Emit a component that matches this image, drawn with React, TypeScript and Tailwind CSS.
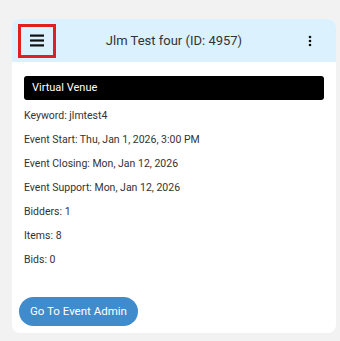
import { ReactNode } from 'react';

const Line = ({ children }: { children: ReactNode }) => (
  <p className="h-6 leading-6 text-[10.5px] text-[#333]">{children}</p>
);

export default function App() {
  return (
    <div className="w-[340px] h-[341px] bg-[#f2f2f2] pt-[19px] pl-3 pr-1 font-['Roboto',sans-serif]">
      <div className="w-[324px] h-[314px] bg-white rounded-lg overflow-hidden flex flex-col">
        <div className="h-[43px] bg-[#dbf1fd] flex items-center pl-[6px] pr-6">
          <button className="w-[38px] h-[34px] border-[3px] border-[#e0201e] flex items-center justify-center">
            <svg width="16" height="13" viewBox="0 0 16 13">
              <rect x="1" y="0.5" width="14" height="2.2" fill="#111" />
              <rect x="1" y="5.4" width="14" height="2.2" fill="#111" />
              <rect x="1" y="10.3" width="14" height="2.2" fill="#111" />
            </svg>
          </button>
          <div className="flex-1 text-center text-[13px] text-[#333] pr-4">Jlm Test four (ID: 4957)</div>
          <svg width="4" height="12" viewBox="0 0 4 12">
            <circle cx="2" cy="2" r="1.3" fill="#111" />
            <circle cx="2" cy="6" r="1.3" fill="#111" />
            <circle cx="2" cy="10" r="1.3" fill="#111" />
          </svg>
        </div>
        <div className="flex flex-col px-3 pt-[14px]">
          <div className="h-6 bg-black rounded-[3px] text-white text-[11px] leading-6 px-2 mb-[4px]">
            Virtual Venue
          </div>
          <Line>Keyword: jlmtest4</Line>
          <Line>Event Start: Thu, Jan 1, 2026, 3:00 PM</Line>
          <Line>Event Closing: Mon, Jan 12, 2026</Line>
          <Line>Event Support: Mon, Jan 12, 2026</Line>
          <Line>Bidders: 1</Line>
          <Line>Items: 8</Line>
          <Line>Bids: 0</Line>
          <div className="mt-[25px]">
            <button className="h-[29px] px-[11px] -ml-[5px] rounded-full bg-[#3f8bcc] text-white text-[11.5px]">
              Go To Event Admin
            </button>
          </div>
        </div>
      </div>
    </div>
  );
}
